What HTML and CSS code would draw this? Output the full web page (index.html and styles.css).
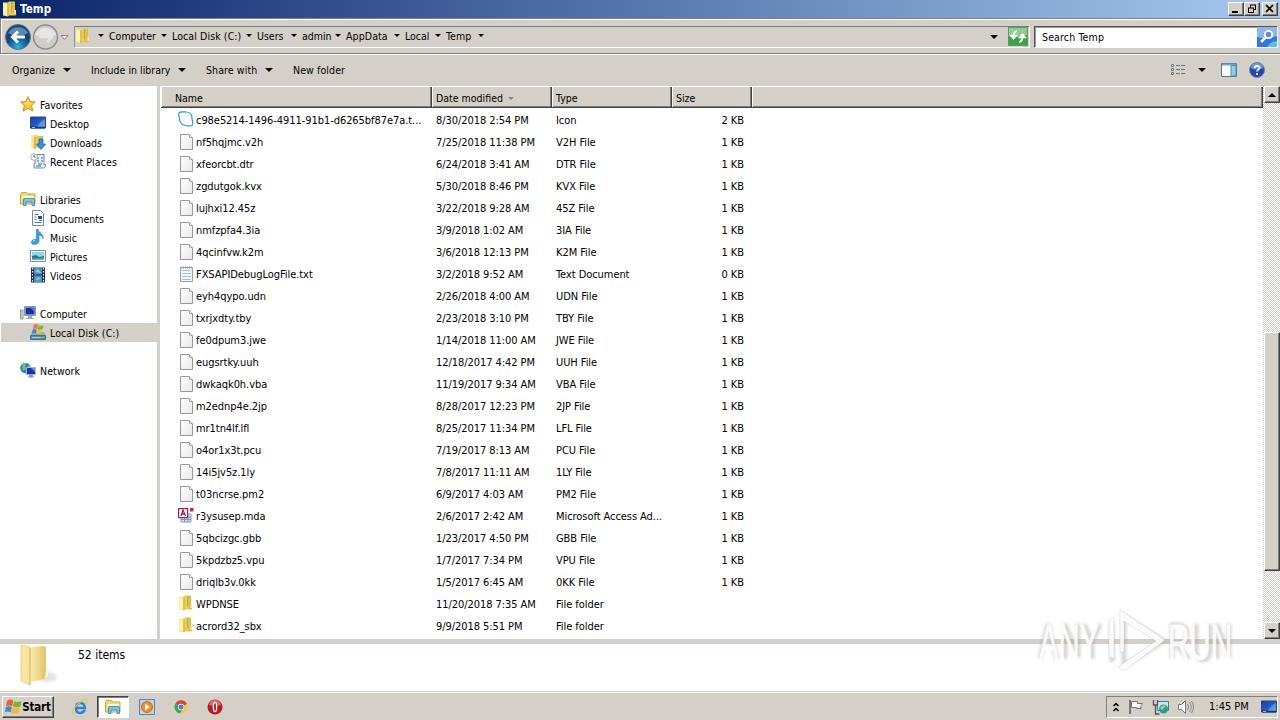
FILE: index.html
```html
<!DOCTYPE html>
<html lang="en">
<head>
<meta charset="utf-8">
<title>Temp</title>
<link rel="stylesheet" href="styles.css">
</head>
<body>
<svg class="defs" width="0" height="0">
  <defs>
    <linearGradient id="gold"><stop offset="0" stop-color="#fbf0a8"/><stop offset=".5" stop-color="#e8cf5c"/><stop offset="1" stop-color="#d9b845"/></linearGradient>
    <linearGradient id="goldBig"><stop offset="0" stop-color="#fbedb0"/><stop offset="1" stop-color="#ddbf62"/></linearGradient>
    <linearGradient id="paper" x2="1" y2="1"><stop offset="0" stop-color="#fff"/><stop offset="1" stop-color="#e6e8ea"/></linearGradient>
    <linearGradient id="screen" x2="1" y2="1"><stop offset="0" stop-color="#1b3f9c"/><stop offset=".5" stop-color="#2458c4"/><stop offset="1" stop-color="#5ca4ec"/></linearGradient>
    <radialGradient id="back" cy=".9"><stop offset="0" stop-color="#32b4e4"/><stop offset=".6" stop-color="#176aa8"/><stop offset="1" stop-color="#164478"/></radialGradient>
    <filter id="soft" x="-20%" y="-20%" width="140%" height="140%"><feGaussianBlur stdDeviation="1.8"/></filter>
    <symbol id="folder" viewBox="0 0 16 16"><path d="M1 1.500h5l1-1h6v12l1.500 1-1 1H7l-1 1-5-1z" fill="url(#gold)"/><path d="M6 2v13M9.500 1v10" stroke="#c29c35" stroke-width=".8"/><path d="M2 2l3 1v11l-3-1z" fill="#fff3b0"/><path d="M10 1.500h2.500v9L10 12z" fill="#e0c04c"/><path d="M12.500 9h1.500v4h-1.500z" fill="#f8eaa0"/></symbol>
    <symbol id="file" viewBox="0 0 16 16"><path d="M1.500.5h9l3 3v12h-12z" fill="url(#paper)" stroke="#989898"/><path d="M10.500.5v3h3" fill="#eee" stroke="#a8a8a8"/></symbol>
    <symbol id="text" viewBox="0 0 16 16"><path d="M1.500 1.500h12v14h-12z" fill="#f3f7fa" stroke="#989fa4"/><path d="M2 1.500h11" stroke="#999" stroke-dasharray="1 1" stroke-width="2"/><path d="M3 4.500h9M3 7.500h9M3 10.500h9M3 13.500h9" stroke="#aac3d2"/></symbol>
    <symbol id="blob" viewBox="0 0 16 16"><path d="M1 2C2 .5 5 .8 8 1c4 0 6 2 6 6 0 3 2 6 0 7.500-2 1.200-4 0-6.500 0C4 14 1.500 11 1.500 8 1.500 6 0 4 1 2z" fill="#fff" stroke="#269bd6" stroke-width="1.200"/></symbol>
    <symbol id="access" viewBox="0 0 16 16"><path d="M3 7h10v8H3z" fill="#dce4f4" stroke="#8795c4"/><path d="M3 10h10M3 12.500h10M6.500 8v7M10 8v7" stroke="#8795c4"/><path d="M.6 1.600h9v9h-9z" fill="#fff" stroke="#a3234e" stroke-width="1.200"/><path d="M3 9l2-6 2.500 6M4 7h3" fill="none" stroke="#a3234e" stroke-width="1.300"/><path d="M12 1h3.500v3.500H12z" fill="#b93053"/></symbol>
    <symbol id="star" viewBox="0 0 16 16"><path d="M8 .7l2.200 4.800 5.200.5-3.800 3.600 1.200 5.500L8 12.300l-4.800 2.800 1.200-5.500L.6 6l5.200-.5z" fill="#fbc63c" stroke="#dc872a"/><path d="M8 3l1 4 3 .3-4 1.500L4 7.500l3-1z" fill="#ffe88a"/></symbol>
    <symbol id="desktop" viewBox="0 0 16 16"><path d="M.5 2h15v11H.5z" fill="url(#screen)" stroke="#2b477d"/><path d="M1 12.500h14" stroke="#20365f" stroke-width="2"/><path d="M2 12.500h3" stroke="#7cc6f6"/><path d="M7 12C10 7 12 5 15 4V12z" fill="#79b8f1" opacity=".45"/></symbol>
    <symbol id="downloads" viewBox="0 0 16 16"><path d="M1 1h6l1 1h5v12H6l-1 1-4-1z" fill="url(#gold)"/><path d="M5 3v12" stroke="#c49a35"/><path d="M9 5h4v5h2.500L11 15.500 6.500 10H9z" fill="#2f91df" stroke="#1e63a8" stroke-width=".8"/></symbol>
    <symbol id="recent" viewBox="0 0 16 16"><path d="M5 1.500h9v10h1.500c0 3-1 3.500-2 3.500H4V11h1z" fill="#e3edf5" stroke="#718da4"/><path d="M7 5h2M11 5h2M7 8h2M11 8h2M8 11h4M6 13h5" stroke="#6a9abd" stroke-width="1.400"/><circle cx="4" cy="4" r="3.300" fill="#fff" stroke="#a3aab0"/><path d="M4 2v2h1.500" stroke="#666" fill="none"/></symbol>
    <symbol id="libs" viewBox="0 0 16 16"><path d="M.5 3.500l1-2h5l1 1.500H15v10H.5z" fill="#efdb78" stroke="#cca638"/><path d="M2 5h12v2H2z" fill="#fff9cc"/><path d="M3.500 14.500V9q0-1.500 1.500-1.500h8q1.500 0 1.500 1.500v5.500H12V11H6v3.500z" fill="#78c6ed" stroke="#3283b5" stroke-width=".8"/></symbol>
    <symbol id="docs" viewBox="0 0 16 16"><path d="M2.500.5h8l3 3v12h-11z" fill="#f7fafd" stroke="#778ca4"/><path d="M4.500 4.500h4M4.500 7h2M4.500 9.500h2M4.500 12.500h7M9 10.500h3" stroke="#5a7eaa"/><path d="M8 6h4v3H8z" fill="#274d8a"/></symbol>
    <symbol id="music" viewBox="0 0 16 16"><path d="M8 0c0 4 6 4 5 10 0-3-3-4-4-4v6c0 2-2 3.500-4.500 3.500C2 15.500 1 14 1.500 12.500 2 11 4 10 6.500 10.500V0z" fill="#3b9fe0" stroke="#2476b4" stroke-width=".6"/><path d="M3 12l2-1" stroke="#c2ecff"/></symbol>
    <symbol id="pics" viewBox="0 0 16 16"><path d="M.5 2.500h15v11H.5z" fill="#fff" stroke="#7c8b95"/><path d="M2 4h12v8H2z" fill="#8ed5ee"/><path d="M2 8l4-1 3 2 5-1v4H2z" fill="#287888"/><path d="M2 10.500l12-.5v2H2z" fill="#56b2bd"/></symbol>
    <symbol id="video" viewBox="0 0 16 16"><path d="M1 .5h14v15H1z" fill="#253345"/><path d="M4 1h8v6.500H4zM4 8.500h8V15H4z" fill="#4b92ce"/><path d="M5 5l3-3 3 4zM5 13l3-3 3 2z" fill="#93c9da"/><path d="M2.500 1v14M13.500 1v14" stroke="#fff" stroke-width="1" stroke-dasharray="1.500 1.500"/></symbol>
    <symbol id="computer" viewBox="0 0 16 16"><path d="M.5 5h2.500v9H.5z" fill="#cbd8c8" stroke="#87968a"/><path d="M4.500 1.500h11v9h-11z" fill="#dce2ec" stroke="#8b96a6"/><path d="M5.500 2.500h9v7h-9z" fill="#1731a3"/><path d="M10 2.500h4.500V7z" fill="#5174dd"/><path d="M8 11h4v2H8zM6 13h8v1H6z" fill="#9ba6b8"/></symbol>
    <symbol id="flag" viewBox="0 0 16 16"><path d="M2 2.500q3-2 5.700 0L6.700 7.700q-3-1.500-5.700 0z" fill="#e76128"/><path d="M8.500 3q3 1.500 7 0l-1 5q-4 1.500-7 0z" fill="#76b62e"/><path d="M.8 8.500q3-1.500 5.700 0l-1.200 5q-2.500-1.500-5.300 0z" fill="#3a8bd8"/><path d="M7.300 9q3 1.500 6.500 0l-1 5q-4 1.500-7 0z" fill="#f4bd27"/></symbol>
    <symbol id="disk" viewBox="0 0 16 16"><path d="M2 8h12l2 4v3.500H0V12z" fill="#85b3bc"/><path d="M.5 11.500h15v4H.5z" fill="#588e9b" stroke="#46717e"/><path d="M2 13.500h9" stroke="#a2cfd4"/><path d="M12 13.500h2" stroke="#66ed61"/><path d="M4 .5q2-1 4.300.5L7.300 5Q5 4 3 5z" fill="#ef7940"/><path d="M8.800 1.300q2 1 4.700 0L12.500 5q-2 1-4.700.5z" fill="#76b62e"/><path d="M7.300 6q2 1 4.600 0L11.300 9.500q-2 1-4.800.3z" fill="#f4bd27"/><path d="M2.700 5.500q2-1 4 .3L6 9.500Q4 8.500 1.700 9.500z" fill="#4385dc"/></symbol>
    <symbol id="network" viewBox="0 0 16 16"><circle cx="5.500" cy="6" r="5.300" fill="#2681bd"/><path d="M2 3q3-3 5-2l-2 3 1 3-3 2zM7 4l3-1v4z" fill="#6bc967"/><path d="M6.500 5.500h9v7h-9z" fill="#1533af" stroke="#a8b7cf"/><path d="M11 6h4v4z" fill="#668ded"/><path d="M9.500 13h3v1.500h-3zM8 15h6" fill="#8997ab" stroke="#8997ab"/></symbol>
  </defs>
</svg>
<div class="window">
  <header class="titlebar">
    <svg class="ic"><use href="#folder"/></svg><b class="title">Temp</b>
    <div class="winbtns">
      <span class="bevel wb"><svg width="14" height="12"><path d="M3 9h6" stroke="#000" stroke-width="2"/></svg></span><span class="bevel wb"><svg width="14" height="12"><path d="M5 2h6M5.500 2v3M10.500 2v5M8 6.500h3M3 5h6M3.500 5v5M8.500 5v5M3 9.500h6" fill="none" stroke="#000"/></svg></span><span class="bevel wb last"><svg width="14" height="12"><path d="M3 2l7 7M10 2L3 9" stroke="#000" stroke-width="1.700"/></svg></span>
    </div>
  </header>
  <nav class="address">
    <svg class="navbtns" width="72" height="30">
      <circle cx="17" cy="15" r="12.500" fill="url(#back)" stroke="#56718c"/><path d="M7 11a11 10 0 0 1 20 0q-10 6-20 0z" fill="#8fc2e0" opacity=".55"/><path d="M24 15H12M17 9.500L11.500 15l5.500 5.500" fill="none" stroke="#fff" stroke-width="3"/>
      <circle cx="44.500" cy="15" r="12" fill="#cfcdca" stroke="#8b8b8b" stroke-width="1.400"/><path d="M34 13a11 10 0 0 1 21 0q-10 3-21 0z" fill="#e6e5e4"/><path d="M38 15h12M46 10l5 5-5 5" fill="none" stroke="#e5e5e4" stroke-width="2.500"/>
      <path d="M60 13.500h7l-3.500 4z" fill="#eee" stroke="#888"/>
    </svg>
    <div class="path">
      <svg class="ic"><use href="#folder"/></svg>
      <i class="dn first"></i><span style="width:52px">Computer</span>
      <i class="dn"></i><span class="wide" style="width:74px">Local Disk (C:)</span>
      <i class="dn"></i><span style="width:34px">Users</span>
      <i class="dn"></i><span style="width:33px">admin</span>
      <i class="dn"></i><span class="wide" style="width:48px">AppData</span>
      <i class="dn"></i><span style="width:30px">Local</span>
      <i class="dn"></i><span class="wide" style="width:32px">Temp</span>
      <i class="dn"></i>
      <i class="dn big drop"></i>
      <svg class="go" width="20" height="19"><rect x=".5" y=".5" width="19" height="18" fill="#36a744" stroke="#65956a"/><path d="M1 1h18v7q-9 4-18 1z" fill="#8dce91"/><path d="M9 4Q5 4 5.500 9M2.500 8.500h6L5.500 12zM11 15q4 0 3.500-5M11.500 10.500h6L14.500 7z" fill="#fff" stroke="#fff" stroke-width="1.300"/></svg>
    </div>
    <div class="search"><span>Search Temp</span><svg width="20" height="20"><rect width="20" height="20" fill="#3377da"/><path d="M0 0h20v9q-10 4-20 1z" fill="#8cb6ea"/><path d="M10 20q5-7 10-6v6z" fill="#58bdf3"/><circle cx="11.500" cy="7.500" r="3.700" fill="#5b8be0" stroke="#fff" stroke-width="1.800"/><path d="M8.500 10.500L4 15" stroke="#fff" stroke-width="2.500"/></svg></div>
  </nav>
  <div class="toolbar">
    <span class="t1">Organize</span><i class="dn big"></i>
    <span class="t2">Include in library</span><i class="dn big"></i>
    <span class="t3">Share with</span><i class="dn big"></i>
    <span class="t4">New folder</span>
    <div class="tools">
      <svg width="16" height="14"><path d="M1.500 1.500h2v2h-2zM1.500 5.500h2v2h-2zM1.500 9.500h2v2h-2z" fill="#fff" stroke="#707c8b"/><path d="M6 2.500h4M11 2.500h4M6 6.500h4M11 6.500h4M6 10.500h4M11 10.500h4" stroke="#667484"/></svg>
      <i class="dn big"></i>
      <svg class="pane" width="16" height="14"><path d="M.5.500h15v13H.5z" fill="#fff" stroke="#50738f"/><path d="M1 1.500h14" stroke="#78a5c5" stroke-width="2"/><path d="M10 2.500h5V13h-5z" fill="#90cde9" stroke="#4c91b8"/></svg>
      <svg width="16" height="16"><circle cx="8" cy="8" r="7.500" fill="#2447ad" stroke="#7483a4"/><path d="M2 6a6 5 0 0 1 12 0q-6 3-12 0z" fill="#7396df"/><path d="M5.700 6.200q0-2.300 2.400-2.300T10.500 6q0 1-1.200 1.700T8 9.500M8 11v2" fill="none" stroke="#fff" stroke-width="1.700"/></svg>
    </div>
  </div>
  <main class="content">
    <aside class="tree">
      <div class="n"><svg class="ic"><use href="#star"/></svg><span>Favorites</span></div>
      <div class="n sub"><svg class="ic"><use href="#desktop"/></svg><span>Desktop</span></div>
      <div class="n sub"><svg class="ic"><use href="#downloads"/></svg><span>Downloads</span></div>
      <div class="n sub"><svg class="ic"><use href="#recent"/></svg><span class="wide">Recent Places</span></div>
      <div class="n gap"><svg class="ic"><use href="#libs"/></svg><span>Libraries</span></div>
      <div class="n sub"><svg class="ic"><use href="#docs"/></svg><span>Documents</span></div>
      <div class="n sub"><svg class="ic"><use href="#music"/></svg><span>Music</span></div>
      <div class="n sub"><svg class="ic"><use href="#pics"/></svg><span>Pictures</span></div>
      <div class="n sub"><svg class="ic"><use href="#video"/></svg><span>Videos</span></div>
      <div class="n gap"><svg class="ic"><use href="#computer"/></svg><span>Computer</span></div>
      <div class="n sub sel"><svg class="ic"><use href="#disk"/></svg><span class="wide">Local Disk (C:)</span></div>
      <div class="n gap"><svg class="ic"><use href="#network"/></svg><span class="wide">Network</span></div>
    </aside>
    <section class="list">
      <div class="head"><span>Name</span><span>Date modified <i class="dn sort"></i></span><span>Type</span><span>Size</span><span></span></div>
      <div class="rows">
      <div class="r"><svg class="ic up"><use href="#blob"/></svg><span>c98e5214-1496-4911-91b1-d6265bf87e7a.t...</span><span>8/30/2018 2:54 PM</span><span>Icon</span><span>2 KB</span></div>
      <div class="r"><svg class="ic"><use href="#file"/></svg><span>nf5hqjmc.v2h</span><span>7/25/2018 11:38 PM</span><span>V2H File</span><span>1 KB</span></div>
      <div class="r"><svg class="ic"><use href="#file"/></svg><span>xfeorcbt.dtr</span><span>6/24/2018 3:41 AM</span><span>DTR File</span><span>1 KB</span></div>
      <div class="r"><svg class="ic"><use href="#file"/></svg><span>zgdutgok.kvx</span><span>5/30/2018 8:46 PM</span><span>KVX File</span><span>1 KB</span></div>
      <div class="r"><svg class="ic"><use href="#file"/></svg><span>lujhxi12.45z</span><span>3/22/2018 9:28 AM</span><span>45Z File</span><span>1 KB</span></div>
      <div class="r"><svg class="ic"><use href="#file"/></svg><span>nmfzpfa4.3ia</span><span>3/9/2018 1:02 AM</span><span>3IA File</span><span>1 KB</span></div>
      <div class="r"><svg class="ic"><use href="#file"/></svg><span>4qcinfvw.k2m</span><span>3/6/2018 12:13 PM</span><span>K2M File</span><span>1 KB</span></div>
      <div class="r"><svg class="ic"><use href="#text"/></svg><span>FXSAPIDebugLogFile.txt</span><span>3/2/2018 9:52 AM</span><span>Text Document</span><span>0 KB</span></div>
      <div class="r"><svg class="ic"><use href="#file"/></svg><span>eyh4qypo.udn</span><span>2/26/2018 4:00 AM</span><span>UDN File</span><span>1 KB</span></div>
      <div class="r"><svg class="ic"><use href="#file"/></svg><span>txrjxdty.tby</span><span>2/23/2018 3:10 PM</span><span>TBY File</span><span>1 KB</span></div>
      <div class="r"><svg class="ic"><use href="#file"/></svg><span>fe0dpum3.jwe</span><span>1/14/2018 11:00 AM</span><span>JWE File</span><span>1 KB</span></div>
      <div class="r"><svg class="ic"><use href="#file"/></svg><span>eugsrtky.uuh</span><span>12/18/2017 4:42 PM</span><span>UUH File</span><span>1 KB</span></div>
      <div class="r"><svg class="ic"><use href="#file"/></svg><span>dwkaqk0h.vba</span><span>11/19/2017 9:34 AM</span><span>VBA File</span><span>1 KB</span></div>
      <div class="r"><svg class="ic"><use href="#file"/></svg><span>m2ednp4e.2jp</span><span>8/28/2017 12:23 PM</span><span>2JP File</span><span>1 KB</span></div>
      <div class="r"><svg class="ic"><use href="#file"/></svg><span>mr1tn4lf.lfl</span><span>8/25/2017 11:34 PM</span><span>LFL File</span><span>1 KB</span></div>
      <div class="r"><svg class="ic"><use href="#file"/></svg><span>o4or1x3t.pcu</span><span>7/19/2017 8:13 AM</span><span>PCU File</span><span>1 KB</span></div>
      <div class="r"><svg class="ic"><use href="#file"/></svg><span>14i5jv5z.1ly</span><span>7/8/2017 11:11 AM</span><span>1LY File</span><span>1 KB</span></div>
      <div class="r"><svg class="ic"><use href="#file"/></svg><span>t03ncrse.pm2</span><span>6/9/2017 4:03 AM</span><span>PM2 File</span><span>1 KB</span></div>
      <div class="r"><svg class="ic up"><use href="#access"/></svg><span>r3ysusep.mda</span><span>2/6/2017 2:42 AM</span><span>Microsoft Access Ad...</span><span>1 KB</span></div>
      <div class="r"><svg class="ic"><use href="#file"/></svg><span>5qbcizgc.gbb</span><span>1/23/2017 4:50 PM</span><span>GBB File</span><span>1 KB</span></div>
      <div class="r"><svg class="ic"><use href="#file"/></svg><span>5kpdzbz5.vpu</span><span>1/7/2017 7:34 PM</span><span>VPU File</span><span>1 KB</span></div>
      <div class="r"><svg class="ic"><use href="#file"/></svg><span>driqlb3v.0kk</span><span>1/5/2017 6:45 AM</span><span>0KK File</span><span>1 KB</span></div>
      <div class="r"><svg class="ic up"><use href="#folder"/></svg><span>WPDNSE</span><span>11/20/2018 7:35 AM</span><span>File folder</span><span></span></div>
      <div class="r"><svg class="ic up"><use href="#folder"/></svg><span>acrord32_sbx</span><span>9/9/2018 5:51 PM</span><span>File folder</span><span></span></div>
      </div>
    </section>
    <div class="scroll"><div class="bevel sb"><i class="upa"></i></div><div class="bevel thumb"></div><div class="bevel sb"><i class="dn big"></i></div></div>
  </main>
  <footer class="details">
    <svg width="42" height="44"><ellipse cx="27" cy="33" rx="10" ry="5" fill="#aebac4" opacity=".4" filter="url(#soft)"/><path d="M9 3l14-1 3 1v22l2 1v8L11 38z" fill="url(#goldBig)"/><path d="M1 1l9 2v38l-9-4z" fill="#f7e5a0" stroke="#e8cd7b" stroke-width=".7"/><path d="M10 4v37" stroke="#d3b562"/><path d="M26 25l2 1v7l-3 2z" fill="#fff8dc"/></svg>
    <span>52 items</span>
  </footer>
</div>
<div class="taskbar">
  <div class="bevel start"><svg width="17" height="17"><use href="#flag"/></svg><b>Start</b></div>
  <svg class="task" viewBox="0 0 16 16"><path d="M13 11q-2 3-5 3-4 0-4-5 0-5 4.500-5 4 0 4.500 5H5" fill="none" stroke="#2786d5" stroke-width="2.500"/><path d="M2 15Q-2 12 6 5t9-3q1 2-2 4" fill="none" stroke="#e7c447" stroke-width="1.200"/></svg>
  <div class="active"><svg class="ic"><use href="#libs"/></svg></div>
  <svg class="task wmp" viewBox="0 0 16 16"><path d="M.5.500h15v15H.5z" fill="#b3d7f4" stroke="#4d83b8"/><circle cx="8" cy="8" r="5.500" fill="#f68b1e" stroke="#d66b0a"/><path d="M6 4.500l5 3.500-5 3.500z" fill="#fff"/></svg>
  <svg class="task chrome" viewBox="0 0 16 16"><circle cx="8" cy="8" r="6.500" fill="#f6c838"/><path d="M8 8L2.400 4.700A6.500 6.500 0 0 1 14 5z" fill="#d94435"/><path d="M8 8L2.400 4.700A6.500 6.500 0 0 0 7 14.400L10 9z" fill="#3ba458"/><circle cx="8" cy="8" r="3.200" fill="#fff"/><circle cx="8" cy="8" r="2.500" fill="#447fdc"/></svg>
  <svg class="task opera" viewBox="0 0 16 16"><circle cx="8" cy="8" r="7.500" fill="#bd1920"/><path d="M2 6a6 5 0 0 1 12 0q-6 2-12 0z" fill="#e06a66"/><ellipse cx="8" cy="8" rx="2.300" ry="5.300" fill="#fff"/><ellipse cx="8" cy="8" rx=".9" ry="4" fill="#8f1518"/></svg>
  <div class="tray">
    <svg width="8" height="12"><path d="M1.500 5L4 2.500 6.500 5M1.500 10L4 7.500 6.500 10" fill="none" stroke="#000" stroke-width="1.500"/></svg>
    <svg width="16" height="16"><path d="M2 1v14" stroke="#777" stroke-width="2"/><path d="M3.500 2.500h6v2h5l-2 3 1 2h-5v-1h-5z" fill="#fff" stroke="#777"/></svg>
    <svg width="17" height="16"><path d="M5.500 2.500h11v9h-11z" fill="#c9e9ee" stroke="#4c7b83"/><path d="M1.500 1v5h4V1M3.500 6v9h4" fill="none" stroke="#555" stroke-width="1.300"/><circle cx="11.500" cy="10" r="4.500" fill="#32998d"/><path d="M8 9q3-4 6-2l-4 4z" fill="#89d6b2"/></svg>
    <svg width="18" height="16"><path d="M1.500 5.500h3l4-4v13l-4-4h-3z" fill="#fff" stroke="#777"/><path d="M10.500 5q2 3 0 6M12.500 3q3.500 5 0 10M14.500 2q4 6 0 12" fill="none" stroke="#888"/></svg>
    <span class="clock">1:45 PM</span>
    <svg class="ic"><use href="#desktop"/></svg>
  </div>
</div>
<svg class="mark" width="210" height="80">
  <g fill="none" stroke="#999" stroke-opacity=".4" stroke-width="7" filter="url(#soft)"><path d="M76 56V16M88 60V10l40 25-40 25M4 53L12 18l9 35M29 53V18l13 33V18M48 18l8 18 8-18M56 36v17M136 53V19q15-2 15 9t-12 9l14 16M160 18v28q1 8 7 8t7-8V18M181 53V18l12 34V18" stroke-width="5"/></g>
  <path d="M73 15l5-4v42l-5-3zM84 4l45 30-41 31-6-4 38-26-32-20v31h-4z" fill="#fff" fill-opacity=".85" stroke="#c4c4c4" stroke-opacity=".4"/>
  <g class="marktext"><text x="3" y="54" textLength="60" lengthAdjust="spacingAndGlyphs">ANY</text><text x="132" y="54" textLength="64" lengthAdjust="spacingAndGlyphs">RUN</text></g>
</svg>
</body>
</html>
```
FILE: styles.css
```css
* { box-sizing: border-box; }
body { margin: 0; width: 1280px; height: 720px; overflow: hidden; display: flex; flex-direction: column; background: #d4d0c8; color: #000; font-family: "DejaVu Sans Condensed", "DejaVu Sans", sans-serif; font-stretch: condensed; font-size: 10.5px; letter-spacing: 0; white-space: nowrap; position: relative; }
svg { display: block; flex: none; }
.defs { position: absolute; }
.ic { width: 16px; height: 16px; }
.wide { letter-spacing: .1px; }
.window { height: 692px; display: flex; flex-direction: column; }
.bevel { background: #d4d0c8; border: 1px solid; border-color: #fff #404040 #404040 #fff; box-shadow: inset -1px -1px #808080; display: flex; align-items: center; justify-content: center; flex: none; }
.dn { flex: none; width: 0; height: 0; border: 3px solid transparent; border-top-color: #000; border-bottom: 0; }
.dn.big { border-width: 4px; border-bottom: 0; }
.upa { border: 4px solid transparent; border-bottom-color: #000; border-top: 0; }

.titlebar { height: 18px; display: flex; align-items: center; padding: 0 2px; background: linear-gradient(90deg, #0a246a, #a6caf0); color: #fff; flex: none; }
.title { margin-left: 2px; font-size: 11.5px; letter-spacing: .1px; }
.winbtns { display: flex; margin-left: auto; }
.wb { width: 16px; height: 14px; }
.wb.last { margin-left: 2px; }

.address { height: 36px; flex: none; display: flex; align-items: center; border-top: 1px solid #808080; border-bottom: 1px solid #808080; border-left: 1px solid #808080; box-shadow: inset 1px 1px #fff, 0 1px #fff; padding: 1px 1px 0 0; }
.navbtns { width: 73px; }
.path { width: 956px; height: 22px; border: 1px solid; border-color: #6f7f87 #fff #fff #7a98ae; display: flex; align-items: center; padding-bottom: 2px; }
.path .ic { margin-top: 1px; }
.path .first { margin-left: 7px; }
.path span { margin-left: 5px; }
.path > .drop { margin-left: auto; margin-right: 10px; margin-top: 2px; }
.path > .go { margin: 2px 1px 0 0; }
.search { margin-left: 4px; width: 244px; height: 22px; display: flex; align-items: center; background: #fff; border: 1px solid; border-color: #555 #fff #fff #555; box-shadow: inset 1px 1px #999; padding-left: 7px; }
.search span { flex: 1; letter-spacing: .15px; }

.toolbar { height: 32px; flex: none; display: flex; align-items: center; padding: 0 15px 1px 12px; }
.toolbar .t1 { width: 51px; letter-spacing: .1px; }
.toolbar .t2 { width: 87px; margin-left: 20px; }
.toolbar .t3 { width: 59px; margin-left: 20px; letter-spacing: .1px; }
.toolbar .t4 { margin-left: 20px; letter-spacing: .1px; }
.tools { margin-left: auto; display: flex; align-items: center; gap: 12px; }
.tools .pane { margin-left: 3px; }

.content { height: 553px; flex: none; display: flex; background: #fff; }
.tree { width: 160px; flex: none; padding: 9px 0 0 1px; border-right: 3px solid #d4d0c8; }
.n { height: 19px; display: flex; align-items: center; padding-left: 19px; gap: 4px; }
.n .ic { margin-bottom: 1px; }
.n.sub { padding-left: 29px; }
.n.gap { margin-top: 19px; }
.n.sel { background: #d4d0c8; }
.list { width: 1103px; border-left: 1px solid #fff; }
.head { height: 22px; display: grid; grid-template-columns: 271px 120px 120px 80px 1fr; background: #d4d0c8; border-top: 1px solid #fff; border-bottom: 1px solid #404040; box-shadow: inset 0 -1px #808080; }
.head span { display: flex; align-items: center; border-right: 1px solid #404040; padding: 2px 0 0 4px; box-shadow: inset 1px 0 #fff, inset -1px 0 #808080; }
.head span:first-child { padding-left: 14px; }
.sort { margin-left: 5px; border-top-color: #888; }
.rows { padding-top: 1px; font-size: 11px; letter-spacing: -.06px; }
.r { height: 22px; display: grid; grid-template-columns: 17px 240px 120px 120px 68px; align-items: center; padding-left: 18px; }
.r .ic { margin-bottom: 1px; }
.r .up { margin-left: -1px; margin-bottom: 2px; }
.r span:last-child { text-align: right; }
.scroll { width: 17px; padding-left: 1px; height: 553px; display: flex; flex-direction: column; background: repeating-conic-gradient(#fff 0 25%, #d4d0c8 0 50%) 0 0 / 2px 2px; }
.sb { width: 16px; height: 17px; }
.thumb { width: 16px; height: 239px; margin: 229px 0 51px; }

.details { flex: 1; background: #fff; border-top: 5px solid #d4d0c8; border-bottom: 1px solid #d4d0c8; display: flex; padding-left: 20px; }
.details span { margin: 4px 0 0 16px; font-size: 12px; letter-spacing: 0; }

.taskbar { height: 28px; border-top: 1px solid #fff; display: flex; align-items: center; padding: 0 2px; }
.start { width: 52px; height: 22px; font-size: 11.5px; letter-spacing: -.15px; }
.start b { margin-left: 0; }
.task { width: 16px; height: 16px; margin-left: 18px; }
.active { width: 32px; height: 22px; margin-left: 9px; background: #fff; border: 1px solid; border-color: #404040 #fff #fff #404040; box-shadow: inset 1px 1px #808080; display: flex; align-items: center; justify-content: center; }
.task.wmp { margin-left: 10px; }
.tray { margin-left: auto; width: 172px; height: 22px; display: flex; align-items: center; gap: 8px; padding: 0 1px 0 5px; border: 1px solid; border-color: #808080 #fff #fff #808080; }
.tray .clock { margin: 0 4px 0 6px; font-size: 11px; }
.tray .ic { margin-left: auto; }
.mark { position: absolute; left: 1036px; top: 606px; overflow: visible; }
.marktext { font: 50px "Liberation Sans", sans-serif; letter-spacing: 0; fill: #fff; fill-opacity: .9; stroke: #fff; stroke-opacity: .7; stroke-width: 1; }
```
